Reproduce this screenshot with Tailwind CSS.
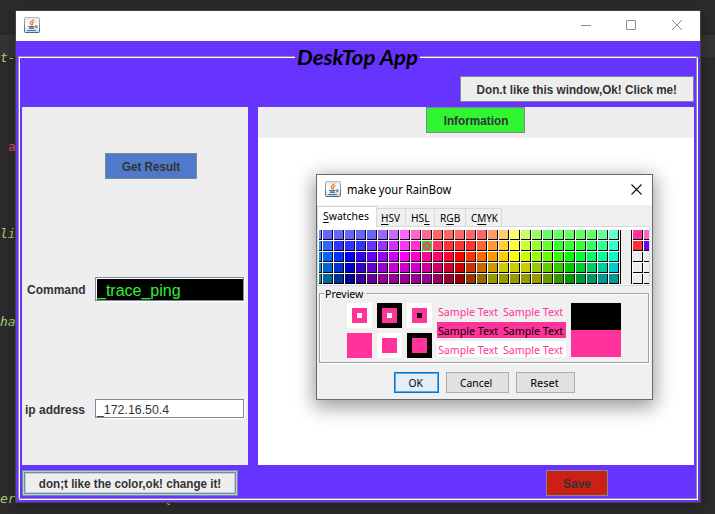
<!DOCTYPE html>
<html lang="en">
<head>
<meta charset="utf-8">
<title>DeskTop App</title>
<script src="https://cdn.jsdelivr.net/npm/@tailwindcss/browser@4"></script>
</head>
<body class="w-[715px] h-[514px] overflow-hidden bg-[#2c2a2d] relative font-['Liberation_Sans',sans-serif] text-[#333]">
<svg width="0" height="0" class="absolute">
  <defs>
    <linearGradient id="jg" x1="0" y1="0" x2="0" y2="1"><stop offset="0" stop-color="#dfe8ef"/><stop offset=".5" stop-color="#fff"/><stop offset="1" stop-color="#c9d3da"/></linearGradient>
    <linearGradient id="jb" x1="0" y1="0" x2="0" y2="1"><stop offset="0" stop-color="#a9bccb"/><stop offset="1" stop-color="#48626f"/></linearGradient>
    <symbol id="java" viewBox="0 0 16 16">
      <rect x=".5" y=".5" width="15" height="15" rx="1" fill="url(#jg)" stroke="url(#jb)"/>
      <path d="M9.3 2.3C9.200 4 6 4.600 6.300 6.300c.1.9 1 1.300 1.200 2.200M10.400 4.600C9.400 5.200 8 5.700 8.300 6.600c.2.6.5.9.1 1.700" fill="none" stroke="#e8751a" stroke-width="1.200"/>
      <path d="M4 9.500h6.600M5 11.400h5M4.400 9.500c1 .5 5 .5 6.200 0M11 9.200c2.400-1.200 3.200.9.2 1.800M3.200 13.500h8.600" fill="none" stroke="#4d7396" stroke-width="1.100"/>
    </symbol>
  </defs>
</svg>

<!-- code editor behind the window -->
<div class="absolute inset-0 font-['DejaVu_Sans_Mono',monospace] text-[13px] leading-4 text-[#a6cf70] italic whitespace-pre">
  <div class="h-[25px] bg-[#353336] border-t-[3px] border-[#2a282b]"></div>
  <span class="absolute left-0 top-[50px]">t-</span>
  <span class="absolute left-2 top-[139px] text-[#e0486e] not-italic">a</span>
  <span class="absolute left-0 top-[226px]">li</span>
  <span class="absolute left-0 top-[314px]">ha</span>
  <span class="absolute left-0 top-[491px]">er bsk- rars dstkest <span class="text-[#e6b422]">{</span></span>
</div>

<!-- main window -->
<div class="absolute left-[16px] top-[11px] w-[684px] h-[491px] bg-[#6633ff] flex flex-col shadow-[0_0_0_1px_#454346,0_3px_12px_3px_rgba(0,0,0,0.2)]">
  <div class="h-[30px] shrink-0 bg-white flex items-center pl-2 pr-[17px]">
    <svg class="size-4 mt-[-2px]"><use href="#java"/></svg>
    <svg class="ml-auto mt-[-2px]" width="103" height="12" fill="none" stroke="#8f8f8f"><path d="M1 6.500h10M46.500 1.500h9v9h-9zM92 1l10 10M102 1l-10 10"/></svg>
  </div>
  <div class="relative mt-[15px] mx-[2px] w-[680px] h-[444px]">
    <div class="absolute left-px top-px w-[679px] h-[443px] border border-white"></div>
    <div class="absolute left-0 top-0 w-[679px] h-[443px] border border-[#8f9199]"></div>
    <div class="absolute left-[277px] top-[-13px] w-[125px] h-7 bg-[#6633ff] pl-[2px] text-black"><span class="inline-block whitespace-nowrap font-['Lato',sans-serif] italic font-bold text-[20px] leading-7 origin-left scale-x-[1.11]">DeskTop App</span></div>
    <div class="px-1 pt-5 flex flex-col h-full relative font-bold text-[12px]">
      <button class="self-end w-[234px] h-[26px] shrink-0 bg-[#eee] border border-[#7a8a99] text-center pt-px"><span class="inline-block whitespace-nowrap scale-x-[.975]">Don.t like this window,Ok! Click me!</span></button>
      <div class="mt-[5px] h-[358px] shrink-0 flex gap-[10px]">
        <div class="w-[226px] bg-[#eee] flex flex-col pl-[3px]">
          <button class="mt-[46px] ml-20 w-[92px] h-[26px] bg-[#4f7ac9] border border-[#7a8a99] pt-px"><span class="inline-block whitespace-nowrap scale-x-[.97]">Get Result</span></button>
          <div class="mt-[98px] flex items-start h-[25px]">
            <label class="w-[70px] pl-[2px] pt-[4px]"><span class="inline-block whitespace-nowrap">Command</span></label>
            <div class="w-[149px] h-[24px] border border-[#7a8a99] bg-black shadow-[1px_1px_0_#fff,inset_1px_1px_0_#fff] text-[#33ee33] font-normal text-[16px] leading-[25px] pl-px"><span class="inline-block whitespace-nowrap">_trace_ping</span></div>
          </div>
          <div class="mt-[97px] flex items-start h-5">
            <label class="w-[70px] pt-[2px]"><span class="inline-block whitespace-nowrap">ip address</span></label>
            <div class="w-[149px] h-[19px] border border-[#7a8a99] bg-white shadow-[1px_1px_0_#fff] font-normal leading-[20px] pl-px"><span class="inline-block whitespace-nowrap origin-left scale-x-[1.03]">_172.16.50.4</span></div>
          </div>
        </div>
        <div class="w-[436px] bg-white">
          <div class="h-[31px] bg-[#eee] flex items-start pl-[168px]"><button class="w-[99px] h-[26px] bg-[#30f530] border border-[#7a8a99] pt-px"><span class="inline-block whitespace-nowrap scale-x-[.98]">Information</span></button></div>
        </div>
      </div>
      <div class="mt-[5px] flex">
        <button class="w-[216px] h-[26px] bg-[#eee] border border-[#7a8a99] shadow-[inset_0_0_0_1px_#b8cfe5,inset_0_0_0_2px_#7a8a99,inset_0_0_0_3px_#b8cfe5] pt-px"><span class="inline-block whitespace-nowrap scale-x-[.97]">don;t like the color,ok! change it!</span></button>
        <button class="ml-[308px] w-[62px] h-[26px] bg-[#cc2015] border border-[#7a8a99] pt-px"><span class="inline-block whitespace-nowrap">Save</span></button>
      </div>
    </div>
  </div>
</div>

<!-- colour chooser dialog -->
<div class="absolute left-[316px] top-[174px] w-[337px] h-[226px] bg-[#f0f0f0] border border-[#686868] shadow-[0_5px_18px_2px_rgba(0,0,0,0.4)] text-black text-[11px] font-['Noto_Sans',sans-serif]">
  <div class="h-[30px] bg-white flex items-center pl-2 pr-[10px]">
    <svg class="size-4 mt-[-2px]"><use href="#java"/></svg>
    <span class="inline-block whitespace-nowrap ml-[6px] text-[12px] origin-left scale-x-[.93]">make your RainBow</span>
    <svg class="ml-auto mt-[-2px]" width="11" height="11" stroke="#111" stroke-width="1.100"><path d="M.5.5l10 10M10.500.5l-10 10"/></svg>
  </div>
  <div class="mt-px h-5 flex items-end relative leading-4">
    <div class="w-[60px] h-[21px] -mb-px bg-white border border-b-0 border-[#d9d9d9] pl-[5px] pt-px relative z-10"><span class="inline-block whitespace-nowrap origin-left scale-x-[.95]"><u class="underline-offset-2">S</u>watches</span></div>
    <div class="w-[29px] h-[18px] border border-l-0 border-b-0 border-[#d9d9d9] pl-1 pt-px"><span class="inline-block whitespace-nowrap origin-left scale-x-[.91]"><u class="underline-offset-2">H</u>SV</span></div>
    <div class="w-[29px] h-[18px] border border-l-0 border-b-0 border-[#d9d9d9] pl-[5px] pt-px"><span class="inline-block whitespace-nowrap origin-left scale-x-[.93]">HS<u class="underline-offset-2">L</u></span></div>
    <div class="w-[31px] h-[18px] border border-l-0 border-b-0 border-[#d9d9d9] pl-[5px] pt-px"><span class="inline-block whitespace-nowrap origin-left scale-x-[.92]">R<u class="underline-offset-2">G</u>B</span></div>
    <div class="w-[36px] h-[18px] border border-l-0 border-b-0 border-[#d9d9d9] pl-[5px] pt-px"><span class="inline-block whitespace-nowrap origin-left scale-x-[.9]">C<u class="underline-offset-2">M</u>YK</span></div>
  </div>
  <div class="w-[333px] h-[60px] bg-white border border-[#d9d9d9] pl-px pt-[3px] flex overflow-hidden">
    <div id="palette" class="grid grid-cols-[3px_repeat(27,10px)] auto-rows-[10px] gap-px shrink-0"></div>
    <div class="ml-px w-3 h-[54px] shrink-0 bg-[#eee] border-x border-black"></div>
    <div id="recent" class="ml-px grid grid-cols-[10px_10px] auto-rows-[10px] gap-px shrink-0"></div>
  </div>
  <div class="relative mt-[7px] ml-[2px] w-[331px] h-[71px]">
    <div class="absolute left-px top-px w-[330px] h-[70px] border border-white"></div>
    <div class="absolute left-0 top-0 w-[330px] h-[70px] border border-[#a0a0a0]"></div>
    <div class="absolute left-[5px] top-[-7px] w-[42px] h-4 bg-[#f0f0f0] leading-4 pl-px"><span class="inline-block whitespace-nowrap origin-left scale-x-[.96]">Preview</span></div>
    <div class="relative pl-7 pt-[10px] flex gap-[5px]">
      <svg width="85" height="55" shape-rendering="crispEdges">
        <path fill="#fff" d="M0 0h25v25H0zM60 0h25v25H60zM30 30h25v25H30z"/>
        <path d="M30 0h25v25H30zM60 30h25v25H60z"/>
        <path fill="#ff3399" d="M5 5h15v15H5zM35 5h15v15H35zM65 5h15v15H65zM0 30h25v25H0zM35 35h15v15H35zM65 35h15v15H65z"/>
        <path fill="#fff" d="M10 10h5v5h-5zM40 10h5v5h-5z"/><path d="M70 10h5v5h-5z"/>
      </svg>
      <div class="w-[129px] flex flex-col gap-[3px] leading-[18px] text-[#ff3399]">
        <div class="h-4 pl-px flex"><span class="w-[65px] whitespace-nowrap origin-left scale-x-[.965] inline-block">Sample Text</span><span class="whitespace-nowrap origin-left scale-x-[.965] inline-block">Sample Text</span></div>
        <div class="h-4 pl-px flex bg-[#ff3399] text-black"><span class="w-[65px] whitespace-nowrap origin-left scale-x-[.965] inline-block">Sample Text</span><span class="whitespace-nowrap origin-left scale-x-[.965] inline-block">Sample Text</span></div>
        <div class="h-4 pl-px flex bg-white"><span class="w-[65px] whitespace-nowrap origin-left scale-x-[.965] inline-block">Sample Text</span><span class="whitespace-nowrap origin-left scale-x-[.965] inline-block">Sample Text</span></div>
      </div>
      <div class="w-[50px] h-[54px] bg-[#ff3399] border-t-[27px] border-black"></div>
    </div>
  </div>
  <div class="mt-2 pl-[77px] flex gap-[7px] leading-[17px]">
    <button class="w-[45px] h-[21px] bg-[#e5eef7] border border-[#0078d7] shadow-[inset_0_0_0_1px_#5ba7e3]"><span class="inline-block whitespace-nowrap scale-x-[.94] -translate-x-px">OK</span></button>
    <button class="w-[63px] h-[21px] bg-[#e1e1e1] border border-[#adadad]"><span class="inline-block whitespace-nowrap scale-x-[.94] -translate-x-px">Cancel</span></button>
    <button class="w-[59px] h-[21px] bg-[#e1e1e1] border border-[#adadad]"><span class="inline-block whitespace-nowrap -translate-x-px">Reset</span></button>
  </div>
</div>

<script>
const rows = [
  '69f 66f 66f 66f 66f 66f 96f c6f f6f f6c f69 f66 f66 f66 f66 f66 f96 fc6 ff6 cf6 9f6 6f6 6f6 6f6 6f6 6f6 6f9 6fc',
  '39f 36f 33f 33f 33f 63f 93f c3f f3f f3c f39 f36 f33 f33 f33 f63 f93 fc3 ff3 cf3 9f3 6f3 3f3 3f3 3f3 3f6 3f9 3fc',
  '09f 06f 03f 00f 30f 60f 90f c0f f0f f0c f09 f06 f03 f00 f30 f60 f90 fc0 ff0 cf0 9f0 6f0 3f0 0f0 0f3 0f6 0f9 0fc',
  '09c 06c 03c 00c 30c 60c 90c c0c c0c c0c c09 c06 c03 c00 c30 c60 c90 cc0 cc0 cc0 9c0 6c0 3c0 0c0 0c3 0c6 0c9 0cc',
  '099 069 039 009 309 609 909 909 909 909 909 906 903 900 930 960 990 990 990 990 990 690 390 090 093 096 099 099'
];
const cell = (c, sel) => `<i class="block h-[10px] border-r border-b border-black" style="background:#${c}">${sel ?
  '<svg class="block" width="10" height="10" fill="none" stroke="#00ff00"><path d="M.5.5h9v9h-9zM1 1l8 8M9 1l-8 8"/></svg>' : ''}</i>`;
document.getElementById('palette').innerHTML = rows.map((r, y) => r.split(' ').map((c, x) => cell(c, y === 1 && x === 10)).join('')).join('');
document.getElementById('recent').innerHTML = 'f39 f6c f33 60f eee eee eee eee eee eee'.split(' ').map(c => cell(c)).join('');
</script>
</body>
</html>
